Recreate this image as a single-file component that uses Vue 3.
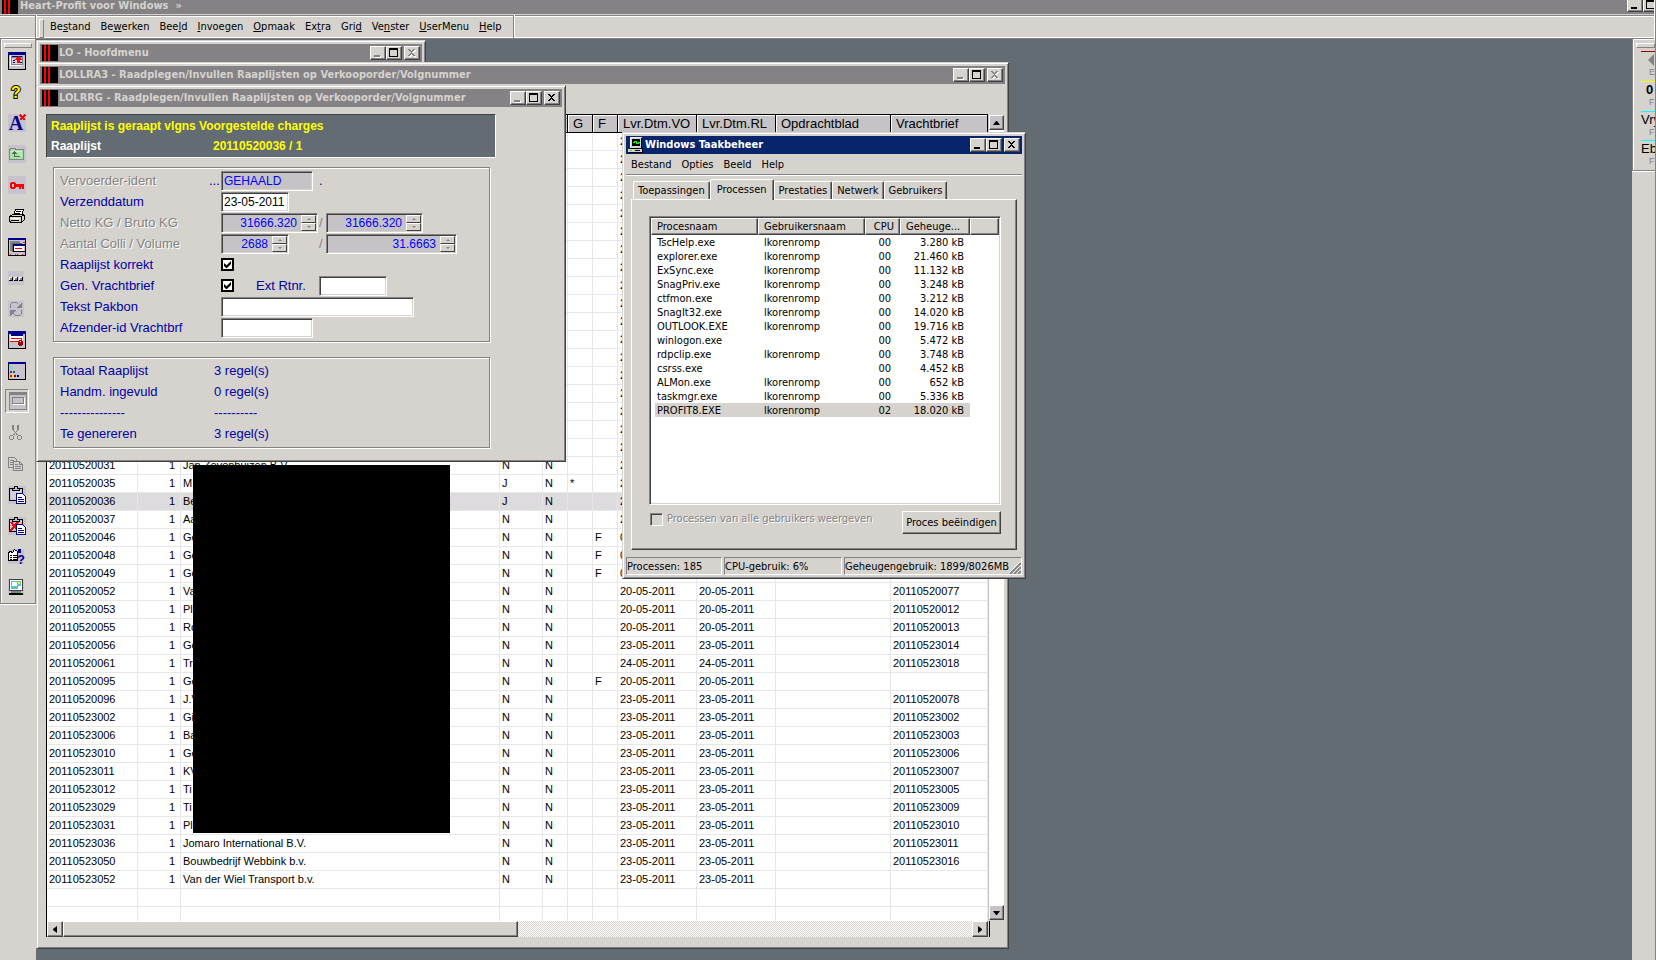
<script setup>
import {ref} from 'vue'

// [before, shortcut letter, after]
const menu = [
    ['Be','s','tand'],
    ['Be','w','erken'],
    ['Bee','l','d'],
    ['','I','nvoegen'],
    ['','O','pmaak'],
    ['Ex','t','ra'],
    ['Gri','d',''],
    ['Ve','n','ster'],
    ['','U','serMenu'],
    ['','H','elp'],
]

const tools = [
    {name:'Hoofdvenster', body:'<path fill="#c6c3ce" stroke="#000" d="M.5.5h17v17H.5z"/><path fill="#00008c" d="M0 0h18v3H0z"/><path fill="none" stroke="#fff" d="M2.500 14V4M2 13.500h12"/><path fill="#848284" d="M3 4h12v9H3z"/><path fill="#d6d3ce" d="M4 6h10v6H4z"/><path fill="#00008c" d="M4 4h10v1H4zM5 8h2v1H5zM5 10h2v1H5zM12 10h2v1h-2z"/><path fill="red" d="M10 4h1v1h1v1h1v1h1v1h-2v3H9V8H7V7h1V6h1V5h1z"/>'},
    {name:'Uitleg', body:'<text x="8" y="15" text-anchor="middle" font-family="Liberation Sans" font-weight="bold" font-size="16" fill="#ff0" stroke="#000" stroke-width="2" paint-order="stroke">?</text>'},
    {name:'Opmaak wissen', body:'<path fill="#c6c3ce" d="M0 0h18v18H0z"/><text x="8" y="16" text-anchor="middle" font-family="Liberation Serif" font-weight="bold" font-size="20" fill="#00008c">A</text><path stroke="red" stroke-width="2" d="M12 1l5 5M17 1l-5 5"/>'},
    {name:'Map omhoog', body:'<path fill="#c6c3ce" d="M0 0h18v18H0z"/><path fill="#a5e3a5" stroke="#848284" d="M1.500 14.500v-10h1v-1h5v1h8v10z"/><path fill="none" stroke="#c6f3c6" d="M3 6h11M3 8h2M11 8h3M11 10h3"/><path fill="#636163" d="M6 6h1v1h1v1h1v1H7v2h5v1H6V9H4V8h1V7h1z"/>'},
    {name:'Sleutel', body:'<path fill="#c6c3ce" d="M0 0h18v18H0z"/><path fill="red" fill-rule="evenodd" d="M3 6h4v1h1v1h8v5h-2v-2h-1v2h-2v-2H8v1H7v1H3v-1H2V7h1zM4 8v3h2V8z"/>'},
    {name:'Afdrukken', body:'<path fill="#fff" stroke="#000" d="M5.500 8.500l2-6h8l-2 6z"/><path stroke="#000" d="M8 4.500h5M7 6.500h5"/><path fill="#d6d3ce" stroke="#000" d="M1.500 9.500l3-2h11l1 1v4l-3 3h-11l-1-2z"/><path fill="none" stroke="#000" d="M1.500 9.500h12v6M13.500 9.500l3-2"/><path fill="#fff" d="M3 11h9v1H3z"/><path stroke="#000" d="M3 13.500h8"/>'},
    {name:'Vensters', body:'<path fill="#c6c3ce" stroke="#000" d="M.5.5h17v17H.5z"/><path fill="#00008c" d="M0 0h18v2H0z"/><path fill="#848284" d="M2 3h10v2H4v8H2z"/><path fill="#636163" d="M4 5h10v2H6v7H4z"/><path fill="#fff" d="M6 8h10v6H6z"/><path fill="none" stroke="#000" d="M5.500 14V6M6 13.500h11"/><path fill="#00008c" d="M5 6h12v2H5z"/><path fill="red" d="M7 10h7v1H7zM15 4h2v1h-2zM2 16h1v1H2zM9 16h1v1H9z"/><path fill="#ff0" d="M15 9h1v1h-1zM5 16h1v1H5zM12 16h1v1h-1z"/><path fill="#f0f" d="M7 16h1v1H7zM14 16h1v1h-1z"/>'},
    {name:'Meer', body:'<path fill="#c6c3ce" d="M0 2h16v14H0z"/><path fill="#fff" d="M1 8h3v3H1zM6 8h3v3H6zM11 8h3v3h-3z"/><path fill="#848284" d="M2 9h2v2H2zM7 9h2v2H7zM12 9h2v2h-2z"/><path fill="none" stroke="#000" d="M1 11.500h3.500V8M6 11.500h3.500V8M11 11.500h3.500V8"/>'},
    {name:'Vernieuwen', body:'<path fill="#c6c3ce" d="M0 1h16v16H0z"/><path fill="none" stroke="#848284" d="M2.500 8V4.500l2-2h4l2 2M13.500 10v3.500l-2 2h-4l-2-2"/><path fill="#848284" d="M14 2v6H8zM2 16v-6h6z"/>'},
    {name:'Venster muis', body:'<path fill="#c6c3ce" stroke="#000" d="M.5.5h17v17H.5z"/><path fill="#00008c" d="M0 0h18v3H0z"/><path fill="#fff" d="M2 4h13v6H2z"/><path fill="#00008c" d="M3 3h12v2H3z"/><path fill="none" stroke="red" d="M3 7.500h10.500V10M2 10.500h9"/><path fill="#a50000" d="M11 9h3v1h1v4h-1v1h-3v-1h-1v-4h1z"/><path fill="#fff" d="M12 10h1v1h-1z"/>'},
    {name:'Venster kleuren', body:'<path fill="#c6c3ce" stroke="#000" d="M.5.5h17v17H.5z"/><path fill="#00008c" d="M0 0h18v2H0z"/><path fill="#0ff" d="M2 5h2v2H2z"/><path fill="#a500a5" d="M2 9h2v2H2z"/><path fill="#008200" d="M5 9h2v2H5z"/><path fill="red" d="M2 13h2v2H2z"/><path fill="#ff0" d="M4 13h1v2H4z"/><path fill="#00008c" d="M9 13h2v2H9z"/><path fill="#840000" d="M6 13h2v2H6z"/>'},
    {name:'Formulier', active:true, body:'<path fill="#c6c3c6" stroke="#848284" d="M.5.5h17v17H.5z"/><path fill="#848284" d="M0 0h18v3H0z"/><path fill="#c6c3c6" stroke="#848284" d="M3.500 5.500h11v6h-11z"/><path fill="none" stroke="#fff" d="M4 12.500h11.500V6"/>'},
    {name:'Knippen', body:'<g fill="none" stroke="#848284"><path d="M4.500 1v4l5 6M5.500 1v4M10.500 1v4l-5 6M9.500 1v4"/><path d="M2.500 11.500h2l1 1v2l-1 1h-2l-1-1v-2zM10.500 11.500h2l1 1v2l-1 1h-2l-1-1v-2z"/></g>'},
    {name:'Kopieren', body:'<g fill="#d6d3ce" stroke="#848284"><path d="M.5 2.500h6l2 2v8h-8z"/><path d="M2 5.500h4M2 7.500h4M2 9.500h4"/><path d="M5.500 6.500h6l3 3v6h-9z"/><path d="M7 9.500h3M7 11.500h6M7 13.500h6"/><path fill="none" d="M11.500 6.500v3h3"/></g>'},
    {name:'Plakken', body:'<path fill="#c6c3ce" d="M0 0h18v18H0z"/><path fill="#c6c3ce" stroke="#000" d="M1.500 2.500h13v12h-13z"/><path fill="#d6d3ce" d="M3 4h10v9H3z"/><path fill="#c6c3ce" stroke="#000" d="M4.500 4.500v-2h2v-2h3v2h2v2z"/><path fill="#fff" stroke="#00008c" d="M8.500 7.500h6l3 3v7h-9z"/><path stroke="#00008c" d="M10 11.500h4M10 13.500h6M10 15.500h6"/>'},
    {name:'Plakken wissen', body:'<path fill="#c6c3ce" d="M0 0h18v18H0z"/><path fill="#c6c3ce" stroke="#000" d="M1.500 2.500h13v12h-13z"/><path fill="#c6c3ce" stroke="#000" d="M4.500 4.500v-2h2v-2h3v2h2v2z"/><path stroke="red" stroke-width="2" d="M3 5l7 9M10 5l-8 9"/><path fill="#fff" stroke="#00008c" d="M8.500 7.500h6l3 3v7h-9z"/><path stroke="#00008c" d="M10 11.500h4M10 13.500h6M10 15.500h6"/>'},
    {name:'Eigenschappen', body:'<path fill="#c6c3ce" d="M0 2h16v15H0z"/><path fill="#fff" stroke="#000" d="M.5 5.500l2-1 2 1 2-3 3 2v9h-9z"/><path stroke="#000" d="M2 8.500h2M5 8.500h4M2 10.500h2M5 10.500h4M2 12.500h2M5 12.500h4"/><path fill="#00008c" d="M10 2h3v4h-3z"/><text x="13" y="17" text-anchor="middle" font-family="Liberation Sans" font-weight="bold" font-size="13" fill="#00008c">?</text>'},
    {name:'Beeldscherm', body:'<path fill="#c6c3ce" d="M0 1h16v16H0z"/><path fill="#fff" stroke="#424142" d="M1.500 1.500h13v11h-13z"/><path fill="#5ac3c6" d="M3 3h10v8H3z"/><path fill="#fff" d="M4 4h5v4H4zM10 8h3v3h-3z"/><path fill="#ff0" d="M10 4h2v2h-2z"/><path fill="#848284" d="M3 13h10v2H3z"/><path fill="#000" d="M1 15h14v2H1z"/><path fill="#0f0" d="M12 14h1v1h-1z"/>'},
]

const sideTools = [
    {color:'#840000', text:'', key:'E'},
    {color:'#ffff00', text:'0', key:'F'},
    {color:'#00ffff', text:'Vry', key:'F'},
    {color:'#00ffff', text:'Ebs', key:'F'},
]

const columns = [
    {label:'', width:91},
    {label:'', width:43},
    {label:'', width:319},
    {label:'', width:43},
    {label:'', width:25},
    {label:'G', width:25},
    {label:'F', width:25},
    {label:'Lvr.Dtm.VO', width:79},
    {label:'Lvr.Dtm.RL', width:79},
    {label:'Opdrachtblad', width:115},
    {label:'Vrachtbrief', width:97},
]

// nummer, naam, a, b, g, f, datum vo, datum rl, vrachtbrief
const orders = [
    ['20110520031','Jan Zevenhuizen B.V.','N','N','','','20-05-2011','20-05-2011',''],
    ['20110520035','M','J','N','*','','20-05-2011','20-05-2011',''],
    ['20110520036','Be','J','N','','','23-05-2011','23-05-2011',''],
    ['20110520037','Aa','N','N','','','20-05-2011','20-05-2011',''],
    ['20110520046','Ge','N','N','','F','03-06-2011','03-06-2011',''],
    ['20110520048','Ge','N','N','','F','03-06-2011','03-06-2011',''],
    ['20110520049','Ge','N','N','','F','03-06-2011','03-06-2011',''],
    ['20110520052','Va','N','N','','','20-05-2011','20-05-2011','20110520077'],
    ['20110520053','Pl','N','N','','','20-05-2011','20-05-2011','20110520012'],
    ['20110520055','Ro','N','N','','','20-05-2011','20-05-2011','20110520013'],
    ['20110520056','Ge','N','N','','','23-05-2011','23-05-2011','20110523014'],
    ['20110520061','Tr','N','N','','','24-05-2011','24-05-2011','20110523018'],
    ['20110520095','Ge','N','N','','F','20-05-2011','20-05-2011',''],
    ['20110520096','J.V','N','N','','','23-05-2011','23-05-2011','20110520078'],
    ['20110523002','Gi','N','N','','','23-05-2011','23-05-2011','20110523002'],
    ['20110523006','Ba','N','N','','','23-05-2011','23-05-2011','20110523003'],
    ['20110523010','Ge','N','N','','','23-05-2011','23-05-2011','20110523006'],
    ['20110523011','KV','N','N','','','23-05-2011','23-05-2011','20110523007'],
    ['20110523012','Ti','N','N','','','23-05-2011','23-05-2011','20110523005'],
    ['20110523029','Ti','N','N','','','23-05-2011','23-05-2011','20110523009'],
    ['20110523031','Pl','N','N','','','23-05-2011','23-05-2011','20110523010'],
    ['20110523036','Jomaro International B.V.','N','N','','','23-05-2011','23-05-2011','20110523011'],
    ['20110523050','Bouwbedrijf Webbink b.v.','N','N','','','23-05-2011','23-05-2011','20110523016'],
    ['20110523052','Van der Wiel Transport b.v.','N','N','','','23-05-2011','23-05-2011',''],
]

const toCells = (o)=>[o[0],'1',o[1],o[2],o[3],o[4],o[5],o[6],o[7],'',o[8]]

const rows = [
    ...Array.from({length:18},()=>['','','','','','','','20-05-2011','','','']),
    ...orders.map(toCells),
    ...Array.from({length:2},()=>Array(11).fill('')),
]
const selected = ref('20110520036')
const select = (row)=>{
    if(row[0]){
        selected.value = row[0]
    }
}

const form = ref({
    vervoerder:'GEHAALD',
    datum:'23-05-2011',
    netto:'31666.320',
    bruto:'31666.320',
    colli:'2688',
    volume:'31.6663',
    korrekt:true,
    vrachtbrief:true,
    ext:'',
    pakbon:'',
    afzender:'',
})

const totals = [
    ['Totaal Raaplijst','3 regel(s)'],
    ['Handm. ingevuld','0 regel(s)'],
    ['---------------','----------'],
    ['Te genereren','3 regel(s)'],
]

const tabs = ['Toepassingen','Processen','Prestaties','Netwerk','Gebruikers']
const tab = ref('Processen')

const processes = [
    ['TscHelp.exe','lkorenromp','00','3.280 kB'],
    ['explorer.exe','lkorenromp','00','21.460 kB'],
    ['ExSync.exe','lkorenromp','00','11.132 kB'],
    ['SnagPriv.exe','lkorenromp','00','3.248 kB'],
    ['ctfmon.exe','lkorenromp','00','3.212 kB'],
    ['SnagIt32.exe','lkorenromp','00','14.020 kB'],
    ['OUTLOOK.EXE','lkorenromp','00','19.716 kB'],
    ['winlogon.exe','','00','5.472 kB'],
    ['rdpclip.exe','lkorenromp','00','3.748 kB'],
    ['csrss.exe','','00','4.452 kB'],
    ['ALMon.exe','lkorenromp','00','652 kB'],
    ['taskmgr.exe','lkorenromp','00','5.336 kB'],
    ['PROFIT8.EXE','lkorenromp','02','18.020 kB'],
]
const process = ref('PROFIT8.EXE')

// title bar glyphs
const glyphs = {
    min:'M3 8h6v2H3z',
    max:'M2 1h9v9H2zM3 3v6h7V3z',
    close:'M3 2h2v1h1v1h1V3h1V2h2v1H9v1H8v1H7v1h1v1h1v1h1v1H8V8H7V7H6v1H5v1H3V8h1V7h1V6h1V5H5V4H4V3H3z',
}
const windows = [
    {id:'menu', title:'LO - Hoofdmenu', off:['min','close']},
    {id:'list', title:'LOLLRA3 - Raadplegen/Invullen Raaplijsten op Verkooporder/Volgnummer', off:['min','close']},
    {id:'form', title:'LOLRRG - Raadplegen/Invullen Raaplijsten op Verkooporder/Volgnummer', off:['min']},
    {id:'task', title:'Windows Taakbeheer', off:[]},
]
</script>

<template>
    <div class="app">
        <header class="app-title">
            <svg class="logo" viewBox="0 0 16 16"><path d="M0 0h16v16H0z"/><path fill="red" d="M2 0h2v16H2zM6 0h2v16H6z"/></svg>
            <span class="app-name">Heart-Profit voor Windows&nbsp; »</span>
            <span class="app-buttons">
                <button class="cap" aria-label="min"><svg viewBox="0 0 13 12"><path :d="glyphs.min"/></svg></button>
                <button class="cap" aria-label="max"><svg viewBox="0 0 13 12"><path fill-rule="evenodd" :d="glyphs.max"/></svg></button>
            </span>
        </header>

        <div class="menu-row">
            <nav class="menu">
                <button v-for="m in menu" :key="m.join('')">{{m[0]}}<u>{{m[1]}}</u>{{m[2]}}</button>
            </nav>
        </div>

        <div class="body">
            <aside class="side">
                <div class="tools">
                    <button v-for="t in tools" :key="t.name" class="tool" :class="{active:t.active}" :aria-label="t.name">
                        <svg viewBox="0 0 18 18" shape-rendering="crispEdges" v-html="t.body"></svg>
                    </button>
                </div>
            </aside>

            <main class="mdi">
                <section v-for="w in windows" :key="w.id" class="win" :class="'win-'+w.id">
                    <div class="title">
                        <svg v-if="w.id=='task'" class="logo" viewBox="0 0 16 16" shape-rendering="crispEdges">
                            <path fill="#d6d3ce" d="M2 0h12v11H2z"/><path fill="#fff" d="M2 0h11v1H3v9H2z"/><path d="M4 2h8v7H4zM13 1h1v11H3v-1h10z"/>
                            <path fill="none" stroke="#0f0" d="M5 5.500h1v-1h2v2h2v-1h2"/>
                            <path fill="#d6d3ce" d="M0 12h14v3H0z"/><path d="M1 15h14v1H1zM14 12h1v3h-1zM7 13h5v1H7z"/><path fill="#0f0" d="M2 13h2v1H2z"/>
                        </svg>
                        <svg v-else class="logo" viewBox="0 0 16 16"><path d="M0 0h16v16H0z"/><path fill="red" d="M2 0h2v16H2zM6 0h2v16H6z"/></svg>
                        <span class="title-text">{{w.title}}</span>
                        <button v-for="(d,key) in glyphs" :key="key" class="cap" :class="[key,{off:w.off.includes(key)}]" :aria-label="key">
                            <svg viewBox="0 0 13 12" shape-rendering="crispEdges"><path fill-rule="evenodd" :d="d"/></svg>
                        </button>
                    </div>

                    <!-- raaplijsten -->
                    <div v-if="w.id=='list'" class="list">
                        <div class="grid-box">
                            <table class="orders">
                                <colgroup><col v-for="(c,i) in columns" :key="i" :style="{width:c.width+'px'}"></colgroup>
                                <thead>
                                    <tr><th v-for="(c,i) in columns" :key="i">{{c.label}}</th></tr>
                                </thead>
                                <tbody>
                                    <tr v-for="(r,i) in rows" :key="i" :class="{selected:r[0]==selected}" @click="select(r)">
                                        <td v-for="(c,j) in r" :key="j">{{c}}</td>
                                    </tr>
                                </tbody>
                            </table>
                        </div>
                        <div class="vscroll">
                            <button aria-label="omhoog"><svg viewBox="0 0 7 4"><path d="M3 0h1l3 4H0z"/></svg></button>
                            <button aria-label="omlaag"><svg viewBox="0 0 7 4"><path d="M0 0h7L4 4H3z"/></svg></button>
                        </div>
                        <div class="hscroll">
                            <button aria-label="links"><svg viewBox="0 0 4 7"><path d="M4 0v7L0 4V3z"/></svg></button>
                            <div class="thumb"></div>
                            <button aria-label="rechts"><svg viewBox="0 0 4 7"><path d="M0 0v7l4-3V3z"/></svg></button>
                        </div>
                        <div class="corner"></div>
                    </div>

                    <!-- raaplijst formulier -->
                    <form v-if="w.id=='form'" class="form" @submit.prevent>
                        <div class="banner">
                            <p>Raaplijst is geraapt vlgns Voorgestelde charges</p>
                            <p><span>Raaplijst</span>20110520036 / 1</p>
                        </div>
                        <div class="group">
                            <div class="row">
                                <label class="dim" for="vervoerder">Vervoerder-ident</label>
                                <div class="cell"><input id="vervoerder" v-model="form.vervoerder" class="field grey medium" readonly></div>
                                <div class="cell">.</div>
                                <span class="dots">...</span>
                            </div>
                            <div class="row">
                                <label for="datum">Verzenddatum</label>
                                <div class="cell"><input id="datum" v-model="form.datum" class="field small"></div>
                            </div>
                            <div class="row">
                                <label class="dim" for="netto">Netto KG / Bruto KG</label>
                                <div class="cell"><div class="field grey spin wide"><input id="netto" v-model="form.netto" readonly><span class="updown"><i></i><i></i></span></div></div>
                                <div class="cell"><span class="slash">/</span><div class="field grey spin wide"><input v-model="form.bruto" aria-label="Bruto KG" readonly><span class="updown"><i></i><i></i></span></div></div>
                            </div>
                            <div class="row">
                                <label class="dim" for="colli">Aantal Colli / Volume</label>
                                <div class="cell"><div class="field grey spin small"><input id="colli" v-model="form.colli" readonly><span class="updown"><i></i><i></i></span></div></div>
                                <div class="cell"><span class="slash">/</span><div class="field grey spin volume"><input v-model="form.volume" aria-label="Volume" readonly><span class="updown"><i></i><i></i></span></div></div>
                            </div>
                            <div class="row">
                                <label for="korrekt">Raaplijst korrekt</label>
                                <div class="cell"><input id="korrekt" v-model="form.korrekt" type="checkbox" class="check"></div>
                            </div>
                            <div class="row">
                                <label for="vrachtbrief">Gen. Vrachtbrief</label>
                                <div class="cell"><input id="vrachtbrief" v-model="form.vrachtbrief" type="checkbox" class="check"><label class="ext" for="ext">Ext Rtnr.</label></div>
                                <div class="cell"><input id="ext" v-model="form.ext" class="field small"></div>
                            </div>
                            <div class="row">
                                <label for="pakbon">Tekst Pakbon</label>
                                <div class="cell"><input id="pakbon" v-model="form.pakbon" class="field long"></div>
                            </div>
                            <div class="row">
                                <label for="afzender">Afzender-id Vrachtbrf</label>
                                <div class="cell"><input id="afzender" v-model="form.afzender" class="field medium"></div>
                            </div>
                        </div>
                        <div class="group totals">
                            <p v-for="t in totals" :key="t[0]"><span>{{t[0]}}</span>{{t[1]}}</p>
                        </div>
                    </form>

                    <!-- taakbeheer -->
                    <div v-if="w.id=='task'" class="task">
                        <nav class="task-menu">
                            <button>Bestand</button><button>Opties</button><button>Beeld</button><button>Help</button>
                        </nav>
                        <div class="tabs" role="tablist">
                            <button v-for="t in tabs" :key="t" role="tab" :class="{current:t==tab}" @click="tab=t">{{t}}</button>
                        </div>
                        <div class="panel">
                            <div class="listview">
                                <table class="procs">
                                    <thead>
                                        <tr><th>Procesnaam</th><th>Gebruikersnaam</th><th>CPU</th><th>Geheuge...</th><th></th></tr>
                                    </thead>
                                    <tbody>
                                        <tr v-for="p in processes" :key="p[0]" :class="{selected:p[0]==process}" @click="process=p[0]">
                                            <td v-for="(c,i) in p" :key="i"><span>{{c}}</span></td>
                                            <td></td>
                                        </tr>
                                    </tbody>
                                </table>
                            </div>
                            <div class="panel-foot">
                                <label class="dim"><input type="checkbox" class="all" disabled>Processen van alle gebruikers weergeven</label>
                                <button class="end">Proces beëindigen</button>
                            </div>
                        </div>
                        <footer class="status">
                            <span>Processen: 185</span>
                            <span>CPU-gebruik: 6%</span>
                            <span>Geheugengebruik: 1899/8026MB
                                <svg viewBox="0 0 12 12"><path stroke="#848284" stroke-width="2" d="M1 12L12 1M5 12l7-7M9 12l3-3"/><path stroke="#fff" d="M0 11L11 0M4 11l8-8M8 11l4-4"/></svg>
                            </span>
                        </footer>
                    </div>
                </section>
                <div class="mask"></div>
            </main>

            <aside class="side-right">
                <div class="keys">
                    <button v-for="(s,i) in sideTools" :key="i" class="key" :aria-label="'F'+i" :style="{borderTopColor:s.color}">
                        <svg v-if="!s.text" viewBox="0 0 12 12"><path fill="#848284" d="M0 6l6-6v12z"/></svg>
                        <span v-else :class="{round:s.text=='0'}">{{s.text}}</span>
                        <small>{{s.key}}</small>
                    </button>
                </div>
            </aside>
        </div>
    </div>
</template>

<style>
body{
    margin: 0;
    overflow: hidden;
}
</style>

<style scoped>
*{
    box-sizing: border-box;
}
.app{
    --face: #d6d3ce;
    --shade: #848284;
    --dark: #424142;
    --ui: "DejaVu Sans Condensed", "Noto Sans", sans-serif;
    --form: "Liberation Sans", sans-serif;
    display: flex;
    flex-direction: column;
    height: 100vh;
    background: var(--face);
    border-right: 1px solid var(--shade);
    box-shadow: inset -1px 0 #fff;
    font: 11px/14px var(--ui);
    color: #000;
    overflow: hidden;
}
button{
    margin: 0;
    padding: 0;
    border: 0;
    background: none;
    font: inherit;
    color: inherit;
}
p{
    margin: 0;
}
.app-title{
    display: flex;
    align-items: flex-end;
    height: 14px;
    padding-left: 2px;
    margin-right: 1px;
    background: var(--shade);
    color: var(--face);
    font-weight: bold;
    overflow: hidden;
}
.logo{
    flex: none;
    width: 16px;
    height: 16px;
}
.app-name{
    flex: 1;
    padding-left: 2px;
    line-height: 16px;
}
.app-buttons{
    display: flex;
    align-items: flex-end;
    width: 27px;
    height: 14px;
    padding-bottom: 2px;
    overflow: hidden;
}
.cap{
    flex: none;
    display: flex;
    width: 16px;
    height: 14px;
    background: var(--face);
    border: 1px solid;
    border-color: #fff var(--dark) var(--dark) #fff;
    box-shadow: inset -1px -1px var(--shade);
}
.cap svg{
    flex: none;
    width: 13px;
    height: 12px;
}
.cap.close{
    margin-left: 2px;
}
.cap.off path{
    fill: var(--shade);
}
.cap.off svg{
    filter: drop-shadow(1px 1px 0 #fff);
}

/* menu */
.menu-row{
    display: flex;
    height: 25px;
    padding: 0 0 0 36px;
    margin-right: 1px;
    border-top: 1px solid var(--face);
    border-bottom: 1px solid var(--shade);
    box-shadow: inset 0 1px var(--shade), inset 0 2px #fff, inset 0 -1px #fff;
}
.menu{
    display: flex;
    align-items: center;
    gap: 10px;
    padding: 0 11px 0 13px;
    border-left: 1px solid #fff;
    border-right: 1px solid var(--shade);
    box-shadow: 1px 0 #fff, -1px 0 var(--shade);
    position: relative;
}
.menu::before{
    content: '';
    position: absolute;
    left: 2px;
    top: 4px;
    width: 3px;
    height: 17px;
    border: 1px solid;
    border-color: #fff var(--shade) var(--shade) #fff;
}

/* toolbars */
.body{
    flex: 1;
    display: flex;
    min-height: 0;
}
.side{
    width: 36px;
    box-shadow: inset 0 1px #fff;
}
.tools{
    display: flex;
    flex-direction: column;
    align-items: flex-start;
    height: 565px;
    padding: 7px 0 0 1px;
    border-left: 1px solid var(--shade);
    border-right: 1px solid var(--shade);
    border-bottom: 1px solid var(--shade);
    box-shadow: inset 1px 1px #fff, 0 1px #fff;
    position: relative;
}
.tools::before, .keys::before{
    content: '';
    position: absolute;
    left: 3px;
    right: 3px;
    top: 4px;
    height: 3px;
    border: 1px solid;
    border-color: #fff var(--shade) var(--shade) #fff;
}
.tool{
    display: flex;
    align-items: center;
    width: 25px;
    height: 31px;
    padding-left: 6px;
}
.tool svg{
    flex: none;
    width: 18px;
    height: 18px;
}
.tool.active{
    height: 24px;
    width: 24px;
    margin: 3px 0 4px 3px;
    padding-left: 3px;
    border: 1px solid;
    border-color: var(--shade) #fff #fff var(--shade);
}
.side-right{
    width: 23px;
    background: var(--face);
    overflow: hidden;
}
.keys{
    display: flex;
    flex-direction: column;
    height: 132px;
    padding: 12px 0 0 8px;
    border-left: 1px solid var(--shade);
    border-bottom: 1px solid var(--shade);
    box-shadow: inset 1px 1px #fff, 0 1px #fff;
    position: relative;
}
.keys::before{
    right: 0;
}
.key{
    display: flex;
    flex-direction: column;
    align-items: flex-start;
    width: 26px;
    height: 31px;
    padding-top: 1px;
    border-top: 1px solid;
    font: 13px/14px var(--form);
}
.key svg{
    width: 12px;
    height: 12px;
    margin: 1px 0 1px 7px;
}
.key small{
    margin-left: 8px;
    font-size: 9px;
    line-height: 10px;
    color: var(--shade);
}
.key .round{
    padding-left: 5px;
    font-weight: bold;
}

/* windows */
.mdi{
    flex: 1;
    position: relative;
    background: #636b73;
    overflow: hidden;
}
.win{
    position: absolute;
    left: 0;
    display: flex;
    flex-direction: column;
    padding: 3px;
    background: var(--face);
    border: 1px solid;
    border-color: var(--face) var(--dark) var(--dark) var(--face);
    box-shadow: inset 1px 1px #fff, inset -1px -1px var(--shade);
}
.win-menu{
    top: 1px;
    width: 390px;
}
.win-list{
    top: 23px;
    width: 973px;
    height: 887px;
}
.win-form{
    top: 46px;
    width: 530px;
}
.win-task{
    left: 586px;
    top: 93px;
    width: 404px;
}
.title{
    display: flex;
    align-items: center;
    height: 18px;
    padding: 0 2px;
    background: var(--shade);
    color: var(--face);
}
.title-text{
    flex: 1;
    padding-left: 1px;
    font-weight: bold;
    white-space: nowrap;
}
.win-task .title{
    background: #08246b;
    color: #fff;
}

/* grid */
.list{
    flex: 1;
    display: grid;
    grid-template-columns: 942px 1fr;
    grid-template-rows: 1fr 16px;
    margin: 30px 1px 8px 6px;
    min-height: 0;
}
.grid-box{
    border-left: 1px solid #000;
    background: #fff;
    overflow: hidden;
}
.orders{
    width: 941px;
    table-layout: fixed;
    border-collapse: separate;
    border-spacing: 0;
    font: 11px/17px var(--form);
}
.orders th{
    height: 19px;
    padding: 0 0 0 5px;
    border-top: 1px solid #000;
    border-bottom: 1px solid #000;
    border-right: 1px solid #000;
    background: #c6c3c6;
    box-shadow: inset 1px 1px #fff;
    font: 13px/17px var(--form);
    text-align: left;
    white-space: nowrap;
}
.orders td{
    height: 18px;
    padding: 0 0 0 2px;
    border-right: 1px solid #e7e7e7;
    border-bottom: 1px solid #e7e7e7;
    white-space: nowrap;
    overflow: hidden;
}
.orders td:nth-child(2){
    padding-right: 5px;
    text-align: right;
}
.orders .selected td{
    background: #dedbde;
}
.vscroll{
    display: flex;
    flex-direction: column;
    justify-content: space-between;
    margin: 1px 1px 1px 0;
    background: #fff;
    border-left: 1px solid #c6c3c6;
}
.vscroll button, .hscroll button{
    display: flex;
    align-items: center;
    justify-content: center;
    flex: none;
    width: 15px;
    height: 15px;
    background: #c6c3c6;
    border: 1px solid;
    border-color: #fff var(--dark) var(--dark) #fff;
    box-shadow: inset -1px -1px var(--shade);
}
.vscroll svg{
    width: 7px;
    height: 4px;
}
.hscroll{
    display: flex;
    border-left: 1px solid #000;
    background: repeating-conic-gradient(#fff 0 25%, var(--face) 0 50%) 0 0 / 2px 2px;
}
.hscroll button{
    width: 16px;
    height: 16px;
    background: var(--face);
}
.hscroll svg{
    width: 4px;
    height: 7px;
}
.thumb{
    width: 455px;
    margin-right: auto;
    background: var(--face);
    border: 1px solid;
    border-color: #fff var(--dark) var(--dark) #fff;
    box-shadow: inset -1px -1px var(--shade);
}
.corner{
    margin-left: 1px;
    border-left: 1px solid #000;
}
.mask{
    position: absolute;
    left: 157px;
    top: 426px;
    width: 257px;
    height: 368px;
    background: #000;
    z-index: 1;
}

/* form */
.form{
    padding: 7px 66px 10px 6px;
    font: 13px/21px var(--form);
    color: #0000a5;
}
.banner{
    padding: 1px 4px;
    border: 1px solid;
    border-color: var(--dark) #fff #fff var(--dark);
    background: #636b73;
    color: #ff0;
    font-size: 12px;
    font-weight: bold;
    line-height: 20px;
}
.banner span{
    display: inline-block;
    width: 162px;
    color: #fff;
}
.group{
    margin: 9px 6px 0 7px;
    padding: 2px 6px 3px;
    border: 1px solid var(--shade);
    box-shadow: inset 1px 1px #fff, 1px 1px #fff;
}
.row{
    display: grid;
    grid-template-columns: 161px 98px 1fr;
    align-items: center;
    height: 21px;
    position: relative;
}
.cell{
    display: flex;
    align-items: center;
}
.dim{
    color: var(--shade);
    text-shadow: 1px 1px #fff;
}
.dots{
    position: absolute;
    left: 149px;
}
.slash{
    flex: none;
    width: 7px;
    color: var(--shade);
}
.field{
    flex: none;
    height: 20px;
    margin: 0;
    padding: 0 2px;
    border: 1px solid;
    border-color: var(--shade) #fff #fff var(--shade);
    border-radius: 0;
    box-shadow: inset 1px 1px var(--dark), inset -1px -1px var(--face);
    background: #fff;
    font: 12px/16px var(--form);
    color: #000;
    outline: none;
}
.grey{
    background: #c6c3c6;
    color: #00f;
}
.small{
    width: 68px;
}
.medium{
    width: 92px;
}
.wide{
    width: 97px;
}
.volume{
    width: 131px;
}
.long{
    width: 193px;
}
.spin{
    display: flex;
    align-items: center;
    padding: 1px 1px 1px 2px;
}
.spin input{
    flex: 1;
    min-width: 0;
    margin: 0;
    padding: 0 4px 0 0;
    border: 0;
    background: none;
    font: inherit;
    color: inherit;
    text-align: right;
    outline: none;
}
.updown{
    flex: none;
    display: flex;
    flex-direction: column;
    width: 15px;
    height: 16px;
}
.updown i{
    display: flex;
    align-items: center;
    justify-content: center;
    height: 8px;
    background: var(--face);
    border: 1px solid;
    border-color: #fff var(--dark) var(--dark) #fff;
}
.updown i::before{
    content: '';
    border: 2px solid transparent;
    border-top: 0;
    border-bottom-color: var(--shade);
}
.updown i:last-child::before{
    transform: rotate(180deg);
}
.check{
    appearance: none;
    width: 13px;
    height: 13px;
    margin: 0;
    border: 2px solid #000;
    background: #fff;
    display: flex;
    align-items: center;
    justify-content: center;
}
.check:checked::before{
    content: '';
    width: 7px;
    height: 7px;
    background: #000;
    clip-path: polygon(0 29%, 0 72%, 29% 100%, 43% 100%, 100% 43%, 100% 0, 36% 62%);
}
.ext{
    margin-left: 22px;
}
.totals{
    margin-top: 15px;
}
.totals span{
    display: inline-block;
    width: 154px;
}

/* task manager */
.task-menu{
    display: flex;
    gap: 10px;
    height: 21px;
    padding: 1px 5px 0;
    border-bottom: 1px solid var(--shade);
    box-shadow: 0 1px #fff;
}
.tabs{
    display: flex;
    align-items: flex-end;
    height: 24px;
    padding-left: 7px;
}
.tabs button{
    height: 18px;
    padding: 1px 4px 0;
    border: 1px solid #fff;
    border-right-color: var(--dark);
    border-bottom: 0;
    border-radius: 2px 2px 0 0;
    box-shadow: inset -1px 0 var(--shade);
}
.tabs .current{
    position: relative;
    z-index: 1;
    height: 21px;
    padding: 0 6px 1px;
    margin-bottom: -1px;
    background: var(--face);
}
.panel{
    margin: 0 5px 7px;
    padding: 16px 15px 15px 17px;
    border: 1px solid;
    border-color: #fff var(--dark) var(--dark) #fff;
    box-shadow: inset -1px -1px var(--shade);
}
.listview{
    height: 289px;
    border: 1px solid;
    border-color: var(--shade) #fff #fff var(--shade);
    box-shadow: inset 1px 1px var(--dark), inset -1px -1px var(--face);
    padding: 1px;
    background: #fff;
}
.procs{
    width: 100%;
    table-layout: fixed;
    border-collapse: separate;
    border-spacing: 0;
}
.procs th{
    height: 17px;
    padding: 0 5px;
    background: var(--face);
    border: 1px solid;
    border-color: #fff var(--dark) var(--dark) #fff;
    box-shadow: inset -1px -1px var(--shade);
    font-weight: normal;
    text-align: left;
    white-space: nowrap;
}
.procs th:nth-child(1){
    width: 107px;
}
.procs th:nth-child(2){
    width: 107px;
}
.procs th:nth-child(3){
    width: 35px;
    text-align: right;
}
.procs th:nth-child(4){
    width: 70px;
}
.procs td{
    height: 14px;
    padding: 1px 6px 0;
    line-height: 13px;
}
.procs td:first-child{
    padding: 0 0 0 4px;
}
.procs td:first-child span{
    display: block;
    padding: 1px 0 0 2px;
}
.procs td:nth-child(3){
    padding-right: 9px;
    text-align: right;
}
.procs td:nth-child(4){
    text-align: right;
    white-space: nowrap;
}
.procs .selected td:not(:last-child){
    background: var(--face);
}
.procs .selected td:first-child{
    background-clip: content-box;
}
.panel-foot{
    display: flex;
    justify-content: space-between;
    padding-top: 6px;
}
.panel-foot label{
    display: flex;
    align-items: center;
    height: 16px;
}
.all{
    appearance: none;
    width: 13px;
    height: 13px;
    margin: 0 4px 0 1px;
    border: 1px solid;
    border-color: var(--shade) #fff #fff var(--shade);
    box-shadow: inset 1px 1px var(--dark);
}
.end{
    width: 99px;
    height: 23px;
    border: 1px solid;
    border-color: #fff var(--dark) var(--dark) #fff;
    box-shadow: inset -1px -1px var(--shade);
    white-space: nowrap;
}
.status{
    display: grid;
    grid-template-columns: 96px 118px 1fr;
    gap: 2px;
}
.status span{
    display: flex;
    justify-content: space-between;
    height: 18px;
    padding-left: 0;
    border: 1px solid;
    border-color: var(--shade) #fff #fff var(--shade);
    line-height: 17px;
    white-space: nowrap;
}
.status svg{
    align-self: flex-end;
    flex: none;
    width: 12px;
    height: 12px;
}
</style>
